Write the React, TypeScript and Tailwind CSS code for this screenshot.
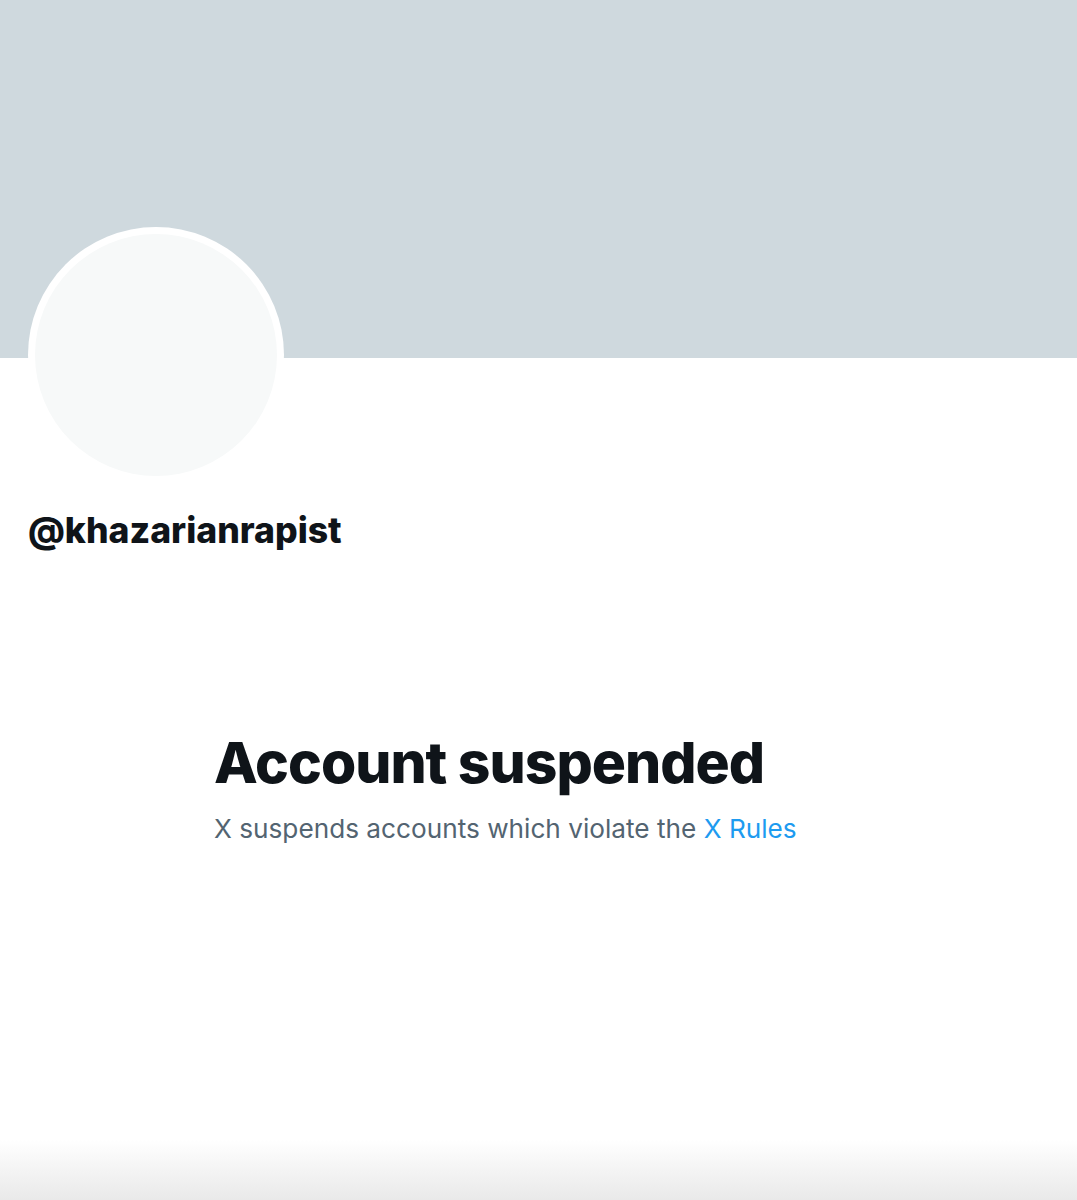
export default function App() {
  return (
    <div className="flex h-[1200px] flex-col bg-white font-['Inter','Liberation_Sans',sans-serif] text-[#0f1419]">
      {/* header banner */}
      <div className="h-[358px] w-full bg-[#cfd9de]" />

      {/* avatar placeholder */}
      <div className="ml-[28px] -mt-[131px] h-[256px] w-[256px] rounded-full bg-white p-[7px]">
        <div className="h-full w-full rounded-full bg-[#f7f9f9]" />
      </div>

      <div className="ml-[28px] mt-[26px] text-[35.6px] font-extrabold leading-[44px]">
        @khazarianrapist
      </div>

      <div className="mt-[174px] pl-[214px]">
        <h1 className="text-[57px] font-extrabold leading-[72px] tracking-[-1px]">
          Account suspended
        </h1>
        <p className="mt-[12px] text-[26.2px] leading-[36px] text-[#536471]">
          X suspends accounts which violate the{' '}
          <a href="#" className="text-[#1d9bf0]">
            X Rules
          </a>
        </p>
      </div>

      <div className="mt-auto h-[60px] w-full bg-gradient-to-b from-white to-[#e9e9e9]" />
    </div>
  );
}
